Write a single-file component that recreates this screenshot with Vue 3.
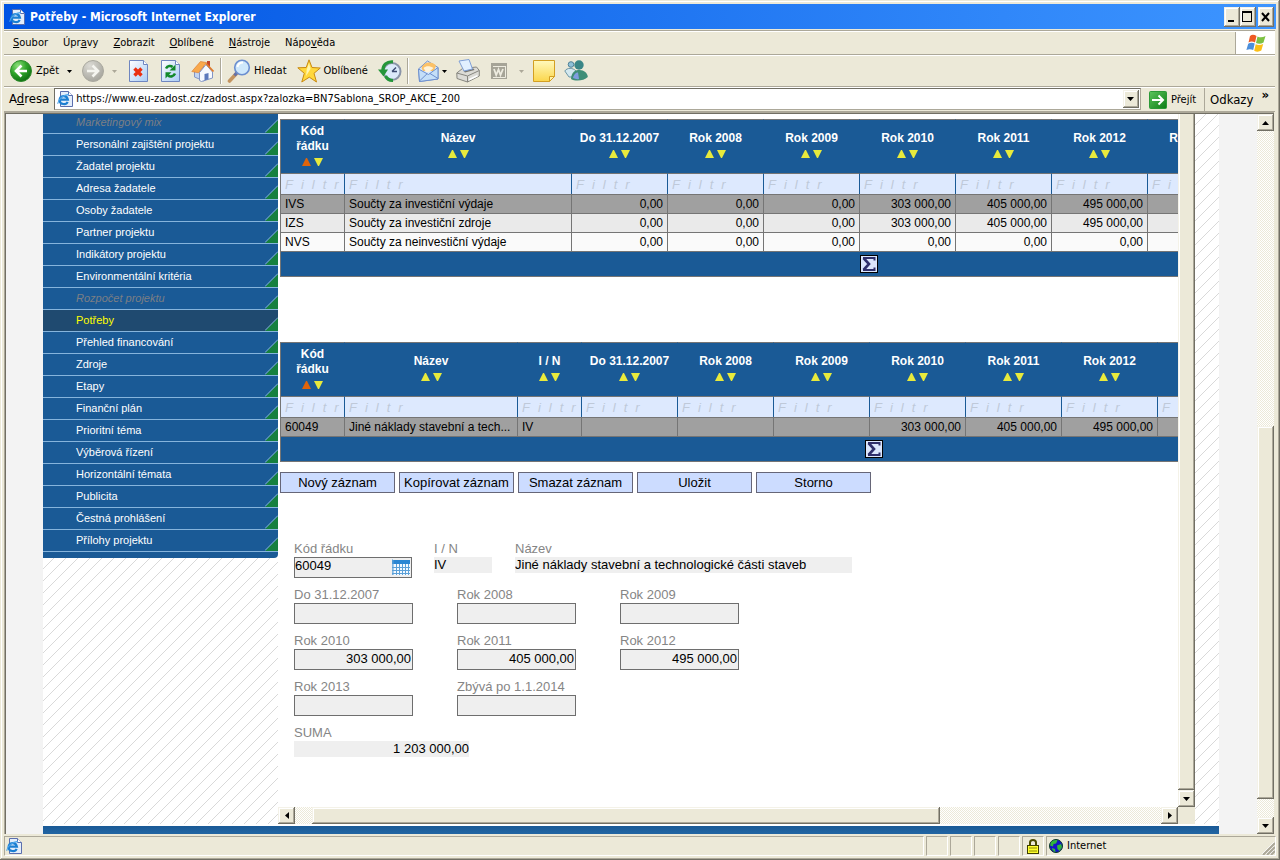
<script setup>
const windowMenus = [
  ['', 'S', 'oubor'],
  ['Úpr', 'a', 'vy'],
  ['', 'Z', 'obrazit'],
  ['', 'O', 'blíbené'],
  ['', 'N', 'ástroje'],
  ['Nápo', 'v', 'ěda'],
]

const sections = [
  { label: 'Marketingový mix', disabled: true },
  { label: 'Personální zajištění projektu' },
  { label: 'Žadatel projektu' },
  { label: 'Adresa žadatele' },
  { label: 'Osoby žadatele' },
  { label: 'Partner projektu' },
  { label: 'Indikátory projektu' },
  { label: 'Environmentální kritéria' },
  { label: 'Rozpočet projektu', disabled: true },
  { label: 'Potřeby', active: true },
  { label: 'Přehled financování' },
  { label: 'Zdroje' },
  { label: 'Etapy' },
  { label: 'Finanční plán' },
  { label: 'Prioritní téma' },
  { label: 'Výběrová řízení' },
  { label: 'Horizontální témata' },
  { label: 'Publicita' },
  { label: 'Čestná prohlášení' },
  { label: 'Přílohy projektu' },
]

const years = ['Do 31.12.2007', 'Rok 2008', 'Rok 2009', 'Rok 2010', 'Rok 2011', 'Rok 2012', 'Rok 2013', '']

const tables = [
  {
    id: 'sums',
    columns: ['Kód řádku', 'Název', ...years],
    sizes: ['code', 'wide'],
    textColumns: 2,
    rows: [
      ['IVS', 'Součty za investiční výdaje', '0,00', '0,00', '0,00', '303 000,00', '405 000,00', '495 000,00', '', ''],
      ['IZS', 'Součty za investiční zdroje', '0,00', '0,00', '0,00', '303 000,00', '405 000,00', '495 000,00', '', ''],
      ['NVS', 'Součty za neinvestiční výdaje', '0,00', '0,00', '0,00', '0,00', '0,00', '0,00', '', ''],
    ],
  },
  {
    id: 'needs',
    columns: ['Kód řádku', 'Název', 'I / N', ...years],
    sizes: ['code', 'name', 'code'],
    textColumns: 3,
    rows: [
      ['60049', 'Jiné náklady stavební a tech...', 'IV', '', '', '', '303 000,00', '405 000,00', '495 000,00', '', ''],
    ],
  },
]

function sizeOf(table, index) {
  if (index === table.columns.length - 1) return 'last'
  return table.sizes[index] || 'year'
}

const actions = ['Nový záznam', 'Kopírovat záznam', 'Smazat záznam', 'Uložit', 'Storno']

const amounts = [
  { id: 'y2007', label: 'Do 31.12.2007', value: '' },
  { id: 'y2008', label: 'Rok 2008', value: '' },
  { id: 'y2009', label: 'Rok 2009', value: '' },
  { id: 'y2010', label: 'Rok 2010', value: '303 000,00' },
  { id: 'y2011', label: 'Rok 2011', value: '405 000,00' },
  { id: 'y2012', label: 'Rok 2012', value: '495 000,00' },
  { id: 'y2013', label: 'Rok 2013', value: '' },
  { id: 'rest', label: 'Zbývá po 1.1.2014', value: '' },
]
</script>

<template>
  <div class="window">
    <svg class="defs" width="0" height="0" aria-hidden="true">
      <defs>
        <pattern id="hatch" width="12" height="12" patternUnits="userSpaceOnUse">
          <path d="M-1 12L12 -1M10 13L13 10" stroke="#d9d9d9" stroke-width="1" fill="none" />
        </pattern>
        <radialGradient id="greenBall" cx="35%" cy="25%" r="80%">
          <stop offset="0" stop-color="#8fe07c" /><stop offset=".5" stop-color="#2fa52a" /><stop offset="1" stop-color="#0b6a10" />
        </radialGradient>
        <radialGradient id="greyBall" cx="35%" cy="25%" r="80%">
          <stop offset="0" stop-color="#dcdbd5" /><stop offset="1" stop-color="#a5a49c" />
        </radialGradient>
        <linearGradient id="sheet" x1="0" y1="0" x2="1" y2="1">
          <stop offset="0" stop-color="#ffffff" /><stop offset="1" stop-color="#a9ccf5" />
        </linearGradient>
        <linearGradient id="noteFill" x1="0" y1="0" x2="0" y2="1">
          <stop offset="0" stop-color="#fff9bd" /><stop offset="1" stop-color="#fbd64b" />
        </linearGradient>
        <linearGradient id="goFill" x1="0" y1="0" x2="1" y2="1">
          <stop offset="0" stop-color="#5cc45c" /><stop offset="1" stop-color="#0d7d16" />
        </linearGradient>
        <symbol id="iePage" viewBox="0 0 16 16">
          <path d="M3.500 .5H11.500L15.500 4.500V15.500H3.500Z" fill="#e4eefb" stroke="#5b6fae" />
          <path d="M11.500 .5V4.500H15.500" fill="#fff" stroke="#5b6fae" />
          <path d="M10.600 10.800C9.500 14 3 14 2.600 9.300C2.800 4.300 9.800 3.600 10.900 8.700H3" fill="none" stroke="#1c7fd2" stroke-width="2.200" />
          <path d="M.7 12.800C1 8.500 6 3.700 12 3.300" fill="none" stroke="#4aa4ea" stroke-width="1.200" />
        </symbol>
      </defs>
    </svg>

    <header class="titlebar">
      <svg class="app-icon" width="16" height="16"><use href="#iePage" /></svg>
      <h1>Potřeby - Microsoft Internet Explorer</h1>
      <div class="window-buttons">
        <button type="button" aria-label="Minimalizovat">
          <svg width="16" height="20"><rect x="4" y="13" width="6" height="2" /></svg>
        </button>
        <button type="button" aria-label="Maximalizovat">
          <svg width="16" height="20"><path d="M2 4H12V15H2ZM3 6V14H11V6Z" fill-rule="evenodd" /></svg>
        </button>
        <button type="button" class="close" aria-label="Zavřít">
          <svg width="16" height="20"><path d="M4 6L11 14M11 6L4 14" stroke="#000" stroke-width="2" /></svg>
        </button>
      </div>
    </header>

    <div class="bars">
      <div class="menubar">
        <nav aria-label="Nabídka okna">
          <button v-for="m in windowMenus" :key="m.join('')" type="button">{{ m[0] }}<u>{{ m[1] }}</u>{{ m[2] }}</button>
        </nav>
        <div class="flag">
          <svg width="20" height="19" viewBox="0 0 20 19">
            <path d="M4 2C6.500 0 8.500 1 10.500 2L9 8.500C7 7.500 5 7 2.500 8.500Z" fill="#ee5a24" />
            <path d="M11.500 2.500C14 3.800 16.500 3.600 19.500 2L17.500 8.500C15 10 12.500 10 10 9Z" fill="#7cc142" />
            <path d="M2.200 9.700C4.500 8.200 7 8.500 8.700 9.600L7.200 16C5 15 3 14.800 .4 16Z" fill="#4c8fdb" />
            <path d="M9.700 10.300C12 11.300 14.500 11.300 17.200 9.900L15.300 16.500C13 18 10.500 18 8.200 16.700Z" fill="#fbbf16" />
          </svg>
        </div>
      </div>

      <div class="toolbar">
        <div class="tools">
          <button type="button" class="tool text">
            <svg width="24" height="24"><circle cx="12" cy="12" r="10.500" fill="url(#greenBall)" stroke="#2e8b2b" /><path d="M18 12H8M12.500 6.500L7 12L12.500 17.500" fill="none" stroke="#fff" stroke-width="2.600" /></svg>
            Zpět
          </button>
          <button type="button" class="drop" aria-label="Historie zpět"><svg width="5" height="3"><path d="M0 0H5L2.500 3Z" /></svg></button>
          <button type="button" class="tool" aria-label="Vpřed">
            <svg width="24" height="24"><circle cx="11" cy="12" r="10.500" fill="url(#greyBall)" stroke="#aaa99f" /><path d="M5 12H15M10.500 6.500L16 12L10.500 17.500" fill="none" stroke="#f5f5f0" stroke-width="2.600" /></svg>
          </button>
          <button type="button" class="drop off" aria-label="Historie vpřed"><svg width="5" height="3"><path d="M0 0H5L2.500 3Z" /></svg></button>
          <button type="button" class="tool" aria-label="Zastavit">
            <svg width="24" height="24"><path d="M2.500 1.500H16.500L20.500 5.500V22.500H2.500Z" fill="url(#sheet)" stroke="#6f86c0" /><path d="M16.500 1.500V5.500H20.500" fill="#fff" stroke="#6f86c0" /><path d="M7.500 9.500L14.500 16.500M14.500 9.500L7.500 16.500" stroke="#ea2f10" stroke-width="3.400" /></svg>
          </button>
          <button type="button" class="tool" aria-label="Aktualizovat">
            <svg width="24" height="24"><path d="M2.500 1.500H16.500L20.500 5.500V22.500H2.500Z" fill="url(#sheet)" stroke="#6f86c0" /><path d="M16.500 1.500V5.500H20.500" fill="#fff" stroke="#6f86c0" /><path d="M7 9.500C8.500 6.500 12 6.500 13.500 8M16 14.500C14.500 18 11 18 9 16.500" fill="none" stroke="#12892a" stroke-width="2.600" /><path d="M16.500 5.500V11.500H10.500ZM6.500 19.500V13.300H12.500Z" fill="#12892a" /></svg>
          </button>
          <button type="button" class="tool" aria-label="Domů">
            <svg width="24" height="24"><path d="M3.500 12L12 6L13 13V22L3.500 18Z" fill="#c2d4f2" stroke="#8195c6" /><path d="M8.500 13.500L15 5.500L21.500 13V19L10.500 22.500L8.500 21.500Z" fill="#f7f9fe" stroke="#8195c6" /><path d="M16 2H19V8L16 6Z" fill="#c2452a" /><path d="M.8 12.500L9.500 2.500L15.500 3.500L7.500 13.800Z" fill="#f9a94c" stroke="#d9772a" stroke-width=".6" /><path d="M15 4.500L22.500 12.500" stroke="#e07a2a" stroke-width="1.800" /><path d="M13.500 15L17.500 14V20.300L13.500 21.500Z" fill="#5d79bb" /></svg>
          </button>
        </div>
        <span class="rule"></span>
        <div class="tools">
          <button type="button" class="tool text">
            <svg width="24" height="24"><path d="M9.500 14.500L2.500 22" stroke="#c4945f" stroke-width="3.600" stroke-linecap="round" /><path d="M10 13.500L7.500 16.500" stroke="#6672a8" stroke-width="3" /><circle cx="15" cy="8.500" r="7.300" fill="#cfe8fb" stroke="#6c8fd0" stroke-width="1.600" /><path d="M10.500 8C11 5 13 3.600 16 3.600" stroke="#fff" stroke-width="2" fill="none" /></svg>
            Hledat
          </button>
          <button type="button" class="tool text">
            <svg width="24" height="24"><path d="M12 .8L15 8.500L23.300 9L17 14.300L19.500 23L12.300 18.200L4.800 23L7.300 14.300L.8 8.800L9.200 8.500Z" fill="#ffd83d" stroke="#c98a12" /><path d="M12 4L13.500 10L9 17L9.800 10.200Z" fill="#fff6b0" /></svg>
            Oblíbené
          </button>
          <button type="button" class="tool" aria-label="Historie">
            <svg width="24" height="24"><circle cx="14" cy="12.500" r="8.500" fill="#dceafa" stroke="#8a94a8" stroke-width="2" /><path d="M14 12.500L18 8.500M14 12.500H19" stroke="#3b4a70" stroke-width="1.400" /><path d="M15 2.800C8.500 2.200 5 6 4.800 11.500M7.500 17C9 20 11.500 21.500 15 21.300" fill="none" stroke="#25963a" stroke-width="3.200" /><path d="M0 10.500H10L5.500 17.500Z" fill="#25963a" /></svg>
          </button>
        </div>
        <span class="rule"></span>
        <div class="tools mailing">
          <button type="button" class="tool" aria-label="Pošta">
            <svg width="24" height="24"><path d="M1.500 10L10.500 2L21 8.500V20L2.500 22.500Z" fill="#d9e9fb" stroke="#6d8fce" /><path d="M4.500 9C6 3 15 1.500 19 6.500L17 12H6Z" fill="#fbc167" /><path d="M6.500 9C9 6.500 13 6.500 16.500 9L12 13H9Z" fill="#fff3d8" /><path d="M1.500 10L11.500 15.500L21 8.500V20L2.500 22.500Z" fill="#c4dff8" stroke="#6d8fce" /><path d="M2.500 22L10 14.800M21 19.500L13 14.500" stroke="#6d8fce" fill="none" /></svg>
          </button>
          <button type="button" class="drop joined" aria-label="Možnosti pošty"><svg width="5" height="3"><path d="M0 0H5L2.500 3Z" /></svg></button>
          <button type="button" class="tool" aria-label="Tisk">
            <svg width="24" height="24"><path d="M.8 14L6.500 9.500L20.500 8L23.300 11.500V17L11.500 23L1 19.500Z" fill="#dcdbd6" stroke="#87867f" /><path d="M.8 14L11.500 17L23.300 11.500M11.500 17V23" fill="none" stroke="#87867f" /><path d="M7 11.500L17.500 9.500L18.500 11L9 13.500Z" fill="#76756f" /><path d="M3 2L13 .5L16.500 10L8 12Z" fill="#e2f0ff" stroke="#7f9fd6" /><path d="M13 20.800L21.500 16.800" stroke="#fff" stroke-width="1.600" /></svg>
          </button>
          <button type="button" class="tool" aria-label="Upravit">
            <svg width="24" height="24"><path d="M4 4H20V20H4Z" fill="#a6a497" /><path d="M6 7.500H18.500M6 18.500H18.500V7" stroke="#eeece0" fill="none" /><path d="M7 10L9.200 16L11.500 10.500L13.500 16L16 10" fill="none" stroke="#eeece0" stroke-width="1.800" /></svg>
          </button>
          <button type="button" class="drop off" aria-label="Možnosti úprav"><svg width="5" height="3"><path d="M0 0H5L2.500 3Z" /></svg></button>
          <button type="button" class="tool" aria-label="Poznámka">
            <svg width="24" height="24"><path d="M.5 1.500H21.500V17.500L16.500 22.500H.5Z" fill="url(#noteFill)" stroke="#d39f22" /><path d="M21.500 17.500H16.500V22.500Z" fill="#fff3a8" stroke="#d39f22" /></svg>
          </button>
          <button type="button" class="tool" aria-label="Messenger">
            <svg width="24" height="24"><circle cx="7" cy="5.500" r="2.800" fill="#8fc1d8" stroke="#4f8197" /><path d="M.8 12C3 8.500 9 8.500 12 12L9 18H5Z" fill="#d3e8ef" stroke="#4f8197" stroke-width=".8" /><circle cx="15" cy="6" r="4.700" fill="#3a8687" /><path d="M7 20C7.500 12 12 11 15.500 11C20 11 23.500 14 23.800 18C20 22 11 22.500 7 20Z" fill="#3f8e77" /><path d="M9 19C10 15 12 13.500 14 13.500L15 20C13 20.500 11 20 9 19Z" fill="#7f9de0" /></svg>
          </button>
        </div>
      </div>

      <div class="addressbar">
        <label for="address">A<u>d</u>resa</label>
        <div class="combo">
          <svg width="16" height="16"><use href="#iePage" /></svg>
          <input id="address" type="text" value="https://www.eu-zadost.cz/zadost.aspx?zalozka=BN7Sablona_SROP_AKCE_200" />
          <button type="button" class="raised" aria-label="Zobrazit adresy"><svg width="7" height="4"><path d="M0 0H7L3.500 4Z" /></svg></button>
        </div>
        <button type="button" class="go">
          <svg width="18" height="18"><rect x=".5" y=".5" width="17" height="17" rx="1" fill="url(#goFill)" stroke="#2c9a38" /><path d="M3 9H14M9.500 4.500L14 9L9.500 13.500" stroke="#fff" stroke-width="2" fill="none" /></svg>
          Přejít
        </button>
        <button type="button" class="links">Odkazy <span>»</span></button>
      </div>
    </div>

    <div class="viewport">
      <div class="page">
        <div class="page-body">
          <aside>
            <nav class="sections" aria-label="Části žádosti">
              <a v-for="s in sections" :key="s.label" href="#" :class="{ disabled: s.disabled, active: s.active }">
                <span>{{ s.label }}</span>
                <svg width="13" height="14"><path d="M13 1V14H0Z" fill="#16803f" /><path d="M0 13.500L13 .5" stroke="#86b4dc" /></svg>
              </a>
            </nav>
            <svg class="hatch"><rect width="100%" height="100%" fill="url(#hatch)" /></svg>
          </aside>

          <div class="frame">
            <div class="frame-row">
              <main>
                <table v-for="t in tables" :key="t.id">
                  <colgroup><col v-for="(c, i) in t.columns" :key="c" :class="sizeOf(t, i)" /></colgroup>
                  <thead>
                    <tr class="titles">
                      <th v-for="(c, i) in t.columns" :key="c" scope="col">
                        <span>{{ c }}</span>
                        <div v-if="c" class="sorts">
                          <button type="button" :class="{ on: i === 0 }" aria-label="Vzestupně"><svg width="9" height="8"><path d="M4 0H5L9 8H0Z" /></svg></button>
                          <button type="button" aria-label="Sestupně"><svg width="9" height="8"><path d="M0 0H9L5 8H4Z" /></svg></button>
                        </div>
                      </th>
                    </tr>
                    <tr class="filters">
                      <td v-for="c in t.columns" :key="c"><input v-if="c" type="text" placeholder="Filtr" :aria-label="'Filtr ' + c" /></td>
                    </tr>
                  </thead>
                  <tbody>
                    <tr v-for="r in t.rows" :key="r[0]">
                      <td v-for="(v, i) in r" :key="i" :class="{ number: i >= t.textColumns }">{{ v }}</td>
                    </tr>
                  </tbody>
                  <tfoot>
                    <tr>
                      <td :colspan="t.columns.length">
                        <button type="button" class="sigma" aria-label="Součet">
                          <svg width="18" height="18"><rect x=".5" y=".5" width="17" height="17" fill="#dbe6fc" stroke="#000" /><path d="M3 3H14.500V5.500M14.500 12.500V15H3" fill="none" stroke="#2f2f6b" stroke-width="2" /><path d="M3.500 3L9 9L3.500 15" fill="none" stroke="#2f2f6b" stroke-width="2.600" /></svg>
                        </button>
                      </td>
                    </tr>
                  </tfoot>
                </table>

                <div class="actions">
                  <button v-for="a in actions" :key="a" type="button">{{ a }}</button>
                </div>

                <form>
                  <div class="record">
                    <div class="field code">
                      <label for="code">Kód řádku</label>
                      <div class="picker">
                        <input id="code" type="text" value="60049" />
                        <button type="button" aria-label="Vybrat ze seznamu">
                          <svg width="18" height="16"><rect width="18" height="15" y="1" fill="#f2f9ff" /><path d="M0 1H18V5H0Z" fill="#2a86d3" /><path d="M0 1H1V16H0ZM0 8.500H18M0 11.500H18M0 14.500H18M4.500 5V16M7.500 5V16M10.500 5V16M13.500 5V16M16.500 5V16" stroke="#5ba0d8" fill="none" /></svg>
                        </button>
                      </div>
                    </div>
                    <div class="field kind">
                      <label for="kind">I / N</label>
                      <input id="kind" class="plain" type="text" value="IV" readonly />
                    </div>
                    <div class="field title">
                      <label for="title">Název</label>
                      <input id="title" class="plain" type="text" value="Jiné náklady stavební a technologické části staveb" readonly />
                    </div>
                  </div>
                  <div class="amounts">
                    <div v-for="a in amounts" :key="a.id" class="field">
                      <label :for="a.id">{{ a.label }}</label>
                      <input :id="a.id" type="text" class="amount" :value="a.value" />
                    </div>
                  </div>
                  <div class="field total">
                    <label for="total">SUMA</label>
                    <input id="total" class="plain" type="text" value="1 203 000,00" readonly />
                  </div>
                </form>
              </main>
              <div class="scroll vertical">
                <span class="thumb raised open"></span>
                <button type="button" class="raised" aria-label="Dolů"><svg width="7" height="4"><path d="M0 0H7L3.500 4Z" /></svg></button>
              </div>
            </div>
            <div class="frame-row bottom">
              <div class="scroll horizontal">
                <button type="button" class="raised" aria-label="Vlevo"><svg width="4" height="7"><path d="M4 0V7L0 3.500Z" /></svg></button>
                <span class="before"></span>
                <span class="thumb raised"></span>
                <span class="after"></span>
                <button type="button" class="raised" aria-label="Vpravo"><svg width="4" height="7"><path d="M0 0V7L4 3.500Z" /></svg></button>
              </div>
              <span class="corner"></span>
            </div>
          </div>

          <svg class="hatch side"><rect width="100%" height="100%" fill="url(#hatch)" /></svg>
        </div>
        <div class="page-foot"></div>
      </div>

      <div class="scroll vertical outer">
        <button type="button" class="raised" aria-label="Nahoru"><svg width="7" height="4"><path d="M0 4H7L3.500 0Z" /></svg></button>
        <span class="before"></span>
        <span class="thumb raised"></span>
        <span class="after"></span>
        <button type="button" class="raised" aria-label="Dolů"><svg width="7" height="4"><path d="M0 0H7L3.500 4Z" /></svg></button>
      </div>
    </div>

    <footer class="statusbar">
      <div class="pane message"><svg width="16" height="16"><use href="#iePage" /></svg></div>
      <div v-for="n in 4" :key="n" class="pane"></div>
      <div class="pane">
        <svg width="14" height="16"><path d="M4 8V4.500C4 1 10 1 10 4.500V8" fill="none" stroke="#4b4b00" stroke-width="2" /><rect x="1.500" y="7.500" width="11" height="8" fill="#ffff2e" stroke="#3f3f00" /><path d="M3 10H11M3 13H11" stroke="#8c8c00" /></svg>
      </div>
      <div class="pane zone">
        <svg width="14" height="14"><circle cx="7" cy="7" r="6.500" fill="#1414c8" stroke="#083a20" /><path d="M2 3.500C4 1 7 .6 8.500 1.500L7 4.500L4.500 5L4 7.500L1 6.500ZM8 6.500L12 5L13 8L10.500 12L8.500 10ZM3 9L6 10L6.500 13C4.500 12.500 3 11 3 9Z" fill="#31b83b" /></svg>
        Internet
        <svg class="grip" width="13" height="13"><path d="M12 0L0 12M12 4L4 12M12 8L8 12" stroke="#fff" stroke-width="1" /><path d="M13 1L1 13M13 5L5 13M13 9L9 13" stroke="#aca899" stroke-width="2" /></svg>
      </div>
    </footer>
  </div>
</template>

<style>
html,
body {
  height: 100%;
  background: #ece9d8;
}
#app {
  height: 100%;
}
</style>

<style scoped>
* {
  box-sizing: border-box;
}
.window {
  display: flex;
  flex-direction: column;
  height: 100vh;
  padding: 4px;
  overflow: hidden;
  background: #ece9d8;
  box-shadow: inset -1px -1px #716f64, inset 1px 1px #ece9d8, inset -2px -2px #aca899, inset 2px 2px #fff;
  font: 11px/14px "DejaVu Sans Condensed", "Open Sans", sans-serif;
  color: #000;
}
.defs {
  position: absolute;
}
button {
  display: flex;
  align-items: center;
  justify-content: center;
  padding: 0;
  border: 0;
  background: none;
  color: inherit;
  font: inherit;
  white-space: nowrap;
}
svg {
  display: block;
  flex: none;
}
input {
  min-width: 0;
  padding: 0;
  border: 0;
  border-radius: 0;
  background: none;
  color: inherit;
  font: inherit;
  outline: 0;
}
.raised,
.window-buttons button {
  background: #ece9d8;
  box-shadow: inset -1px -1px #716f64, inset 1px 1px #f4f2e8, inset -2px -2px #aca899, inset 2px 2px #fff;
}

.titlebar {
  display: flex;
  align-items: center;
  flex: none;
  gap: 5px;
  height: 25px;
  padding: 0 2px 0 5px;
  background: linear-gradient(90deg, #0054e3, #3d95ff);
  color: #fff;
}
h1 {
  flex: 1;
  margin: 0;
  font: bold 12px/18px "DejaVu Sans Condensed", "Open Sans", sans-serif;
}
.window-buttons {
  display: flex;
}
.window-buttons button {
  width: 16px;
  height: 20px;
}
.window-buttons .close {
  margin-left: 2px;
}

.bars {
  flex: none;
  margin: 1px 1px 0 0;
  border-top: 1px solid #aca899;
}
.menubar,
.toolbar,
.addressbar {
  display: flex;
  border-top: 1px solid #fff;
  border-bottom: 1px solid #aca899;
}
.menubar {
  height: 24px;
}
.menubar nav {
  display: flex;
  flex: 1;
  gap: 15px;
  padding-left: 9px;
}
.flag {
  display: flex;
  align-items: center;
  justify-content: center;
  width: 40px;
  border-left: 1px solid #aca899;
  background: #fff;
}
.toolbar {
  align-items: center;
  height: 32px;
  padding-left: 5px;
}
.tools {
  display: flex;
  gap: 8px;
}
.mailing {
  gap: 7px;
  padding-left: 3px;
}
.tool {
  min-width: 24px;
  height: 24px;
  gap: 3px;
}
.tool.text {
  padding-right: 2px;
}
.drop {
  width: 10px;
  margin-left: -5px;
}
.mailing .drop {
  width: 8px;
  margin-left: 0;
}
.mailing .joined {
  margin-left: -7px;
}
.off {
  fill: #aca899;
}
.rule {
  width: 2px;
  height: 26px;
  margin: 0 5px;
  border-left: 1px solid #aca899;
  background: #fff;
}
.addressbar {
  height: 25px;
}
.addressbar label {
  padding: 0 5px;
  font-size: 13px;
  line-height: 22px;
}
.combo {
  display: flex;
  align-items: center;
  flex: 1;
  gap: 3px;
  height: 22px;
  padding: 0 1px 0 2px;
  border: 1px solid #aca899;
  border-top-color: #716f64;
  border-left-color: #716f64;
  background: #fff;
}
.combo input {
  flex: 1;
}
.combo button {
  width: 16px;
  height: 18px;
}
.go {
  gap: 4px;
  padding: 0 8px;
}
.links {
  gap: 8px;
  padding: 0 6px 0 5px;
  border-left: 1px solid #aca899;
  font-size: 13px;
}
.links span {
  align-self: flex-start;
  font-weight: bold;
  line-height: 14px;
}

.viewport {
  display: flex;
  flex: 1;
  min-height: 0;
  margin-right: 2px;
  border: 1px solid #aca899;
  border-width: 1px 0 0 1px;
  box-shadow: inset 1px 1px #716f64;
  padding: 1px 0 0 1px;
  font-family: "Liberation Sans", Arial, sans-serif;
}
.page {
  display: flex;
  flex-direction: column;
  flex: 1;
  min-width: 0;
  padding: 0 38px 0 37px;
  background: #f3f3f3;
}
.page-body {
  display: flex;
  flex: 1;
  min-height: 0;
  overflow: hidden;
  background: #fff;
}
.page-foot {
  height: 10px;
  border-top: 2px solid #fff;
  background: linear-gradient(#1a5a96, #2265a3);
}
aside {
  display: flex;
  flex-direction: column;
  width: 235px;
}
.sections {
  flex: none;
  margin-top: -2px;
  padding-bottom: 6px;
  border-bottom-right-radius: 4px;
  background: #1a5a96;
}
.sections a {
  display: flex;
  align-items: flex-end;
  justify-content: space-between;
  height: 22px;
  padding-left: 33px;
  border-bottom: 1px solid #86b4dc;
  color: #fff;
  line-height: 21px;
  text-decoration: none;
}
.sections .disabled {
  color: #7c7f85;
  font-style: italic;
}
.sections .active {
  background: #1f4a70;
  color: #ffff00;
}
.hatch {
  flex: 1;
  width: 100%;
  min-height: 0;
}
.hatch.side {
  flex: none;
  width: 24px;
  height: 100%;
}

.frame {
  display: flex;
  flex-direction: column;
  flex: 1;
  min-width: 0;
}
.frame-row {
  display: flex;
  flex: 1;
  min-height: 0;
}
.frame-row.bottom {
  flex: none;
}
.corner {
  width: 17px;
  background: #ece9d8;
}
.scroll {
  display: flex;
  background: repeating-conic-gradient(#ece9d8 0 25%, #fff 0 50%) 0 0 / 2px 2px;
}
.vertical {
  flex: none;
  flex-direction: column;
  width: 17px;
}
.horizontal {
  flex: 1;
  height: 17px;
}
.scroll button {
  flex: none;
  width: 17px;
  height: 17px;
}
.scroll .open {
  flex: 1;
  margin-top: -2px;
}
.horizontal .before {
  flex: 17;
}
.horizontal .thumb {
  flex: 628;
}
.horizontal .after {
  flex: 221;
}
.outer .before {
  flex: 295;
}
.outer .thumb {
  flex: 373;
}
.outer .after {
  flex: 18;
}

main {
  flex: 1;
  min-width: 0;
  overflow: hidden;
  padding: 5px 0 0 2px;
  background: #fff;
}
table {
  width: 0;
  border-spacing: 0;
  border-bottom: 1px solid #757575;
  table-layout: fixed;
  font-size: 12px;
  line-height: 15px;
}
table + table {
  margin-top: 65px;
}
.code {
  width: 64px;
}
.wide {
  width: 227px;
}
.name {
  width: 173px;
}
.year {
  width: 96px;
}
.last {
  width: 214px;
}
th,
td {
  overflow: hidden;
  padding: 0 4px;
  border-top: 1px solid #757575;
  border-left: 1px solid #757575;
  text-overflow: ellipsis;
  white-space: nowrap;
}
th {
  height: 54px;
  border-left-color: #1a5a96;
  background: #1a5a96;
  color: #fff;
  white-space: normal;
}
th:first-child {
  padding: 0 12px;
}
th:first-child,
.filters td:first-child {
  border-left-color: #757575;
}
.sorts {
  display: flex;
  align-items: center;
  justify-content: center;
  gap: 3px;
  height: 16px;
}
.sorts button {
  fill: #e8ea3c;
}
.sorts .on {
  fill: #e0640a;
}
.filters td {
  height: 21px;
  padding: 0;
  border-left-color: #1a5a96;
  background: #dde9fe;
}
.filters input {
  display: block;
  width: 100%;
  height: 18px;
  padding-left: 4px;
  font-size: 13px;
  font-style: italic;
  letter-spacing: 8px;
}
.filters input::placeholder {
  color: #bfc9d9;
}
tbody td {
  height: 19px;
  background: #fafafa;
}
tbody tr:nth-child(2) td {
  background: #eaeaea;
}
tbody tr:first-child td {
  background: #a0a0a0;
}
.number {
  text-align: right;
}
tfoot td {
  height: 25px;
  background: #1a5a96;
}
.sigma {
  margin: 0 auto;
}

.actions {
  display: flex;
  gap: 4px;
  margin-top: 10px;
}
.actions button {
  width: 115px;
  height: 21px;
  border: 1px solid #666678;
  background: #ccdcff;
  font-size: 13px;
}
form {
  margin: 48px 0 0 14px;
  font-size: 13px;
  line-height: 16px;
}
.field label {
  display: block;
  height: 16px;
  color: #858585;
}
.field input {
  display: block;
  width: 100%;
  height: 16px;
}
.record {
  display: flex;
  margin-bottom: 9px;
}
.field.code {
  width: 118px;
}
.field.kind {
  width: 58px;
  margin: 0 23px 0 22px;
}
.field.title {
  width: 337px;
}
.field .plain {
  background: #efefef;
}
.picker {
  display: flex;
  height: 21px;
  padding: 0 1px 1px 0;
  border: 1px solid #6e6e6e;
  background: #efefef;
}
.amounts {
  display: grid;
  grid-template-columns: repeat(3, 119px);
  gap: 9px 44px;
  margin-bottom: 9px;
}
.field .amount {
  height: 21px;
  padding: 0 1px 2px 0;
  border: 1px solid #6e6e6e;
  background: #efefef;
  text-align: right;
}
.total {
  width: 175px;
}
.total .plain {
  text-align: right;
}

.statusbar {
  display: flex;
  flex: none;
  gap: 2px;
  margin-top: 2px;
  height: 20px;
}
.pane {
  display: flex;
  align-items: center;
  justify-content: center;
  width: 22px;
  border: 1px solid;
  border-color: #aca899 #fff #fff #aca899;
}
.pane.message {
  flex: 1;
  justify-content: flex-start;
  padding-left: 1px;
}
.pane.zone {
  justify-content: flex-start;
  gap: 4px;
  width: 230px;
  padding-left: 2px;
}
.grip {
  align-self: flex-end;
  margin-left: auto;
}
</style>
